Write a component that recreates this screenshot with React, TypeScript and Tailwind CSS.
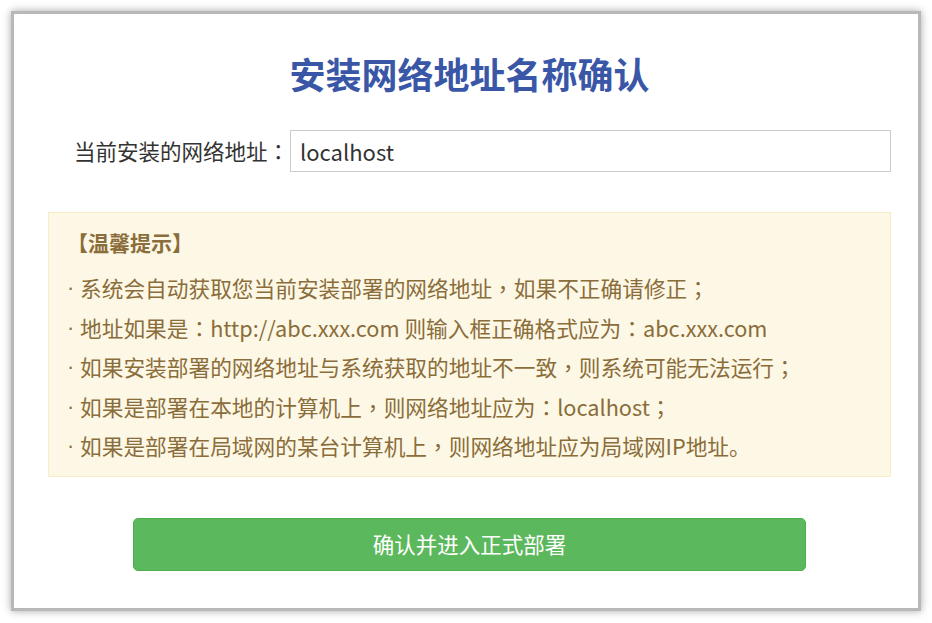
import React from "react";

const tips = [
  "系统会自动获取您当前安装部署的网络地址，如果不正确请修正；",
  "地址如果是：http://abc.xxx.com 则输入框正确格式应为：abc.xxx.com",
  "如果安装部署的网络地址与系统获取的地址不一致，则系统可能无法运行；",
  "如果是部署在本地的计算机上，则网络地址应为：localhost；",
  "如果是部署在局域网的某台计算机上，则网络地址应为局域网IP地址。",
];

function Punct({ text }: { text: string }) {
  const parts = text.split(/([：，；])/);
  return (
    <>
      {parts.map((p, i) =>
        /^[：，；]$/.test(p) ? (
          <span key={i} style={{ fontFamily: '"Noto Sans CJK TC", sans-serif' }}>
            {p}
          </span>
        ) : (
          <React.Fragment key={i}>{p}</React.Fragment>
        )
      )}
    </>
  );
}

export default function App() {
  return (
    <div
      className="w-[932px] h-[623px] bg-white pt-[11px] pl-[11px]"
      style={{ fontFamily: '"Noto Sans CJK SC", sans-serif' }}
    >
      <div className="w-[910px] h-[600px] border-[3px] border-[#b8b8b8] bg-white shadow-[0_0_8px_rgba(0,0,0,0.35)]">
        <div className="w-[843px] ml-[34px] flex flex-col">
          <h1 className="mt-[34px] h-[50px] leading-[50px] text-center text-[36px] font-bold text-[#3a57a7]">
            安装网络地址名称确认
          </h1>
          <div className="mt-[32px] flex h-[42px] items-center">
            <label className="w-[242px] pr-[1px] text-right text-[21.5px] text-[#333]">
              <Punct text="当前安装的网络地址：" />
            </label>
            <input
              defaultValue="localhost"
              className="flex-1 h-[42px] border border-[#cccccc] px-[9px] text-[22px] text-[#333] outline-none"
            />
          </div>
          <div className="mt-[40px] h-[265px] border border-[#f8ecc9] bg-[#fdf8e5] pl-[18px] pt-[9px] text-[#8a6d3b]">
            <div className="h-[40px] leading-[40px] text-[21px] font-bold">【温馨提示】</div>
            <div className="mt-[6px]">
              {tips.map((t) => (
                <div
                  key={t}
                  className="flex h-[39.5px] leading-[39.5px] text-[21.7px]"
                  style={{ fontFamily: '"Noto Sans CJK SC", sans-serif' }}
                >
                  <span
                    className="w-[13px] shrink-0 text-left"
                    style={{ fontFamily: '"Liberation Sans", sans-serif' }}
                  >
                    ·
                  </span>
                  <span className="whitespace-nowrap">
                    <Punct text={t} />
                  </span>
                </div>
              ))}
            </div>
          </div>
          <button className="mt-[41px] mx-auto w-[673px] h-[53px] rounded-[5px] border border-[#4cae4c] bg-[#5cb85c] text-[21.5px] text-white">
            确认并进入正式部署
          </button>
        </div>
      </div>
    </div>
  );
}
